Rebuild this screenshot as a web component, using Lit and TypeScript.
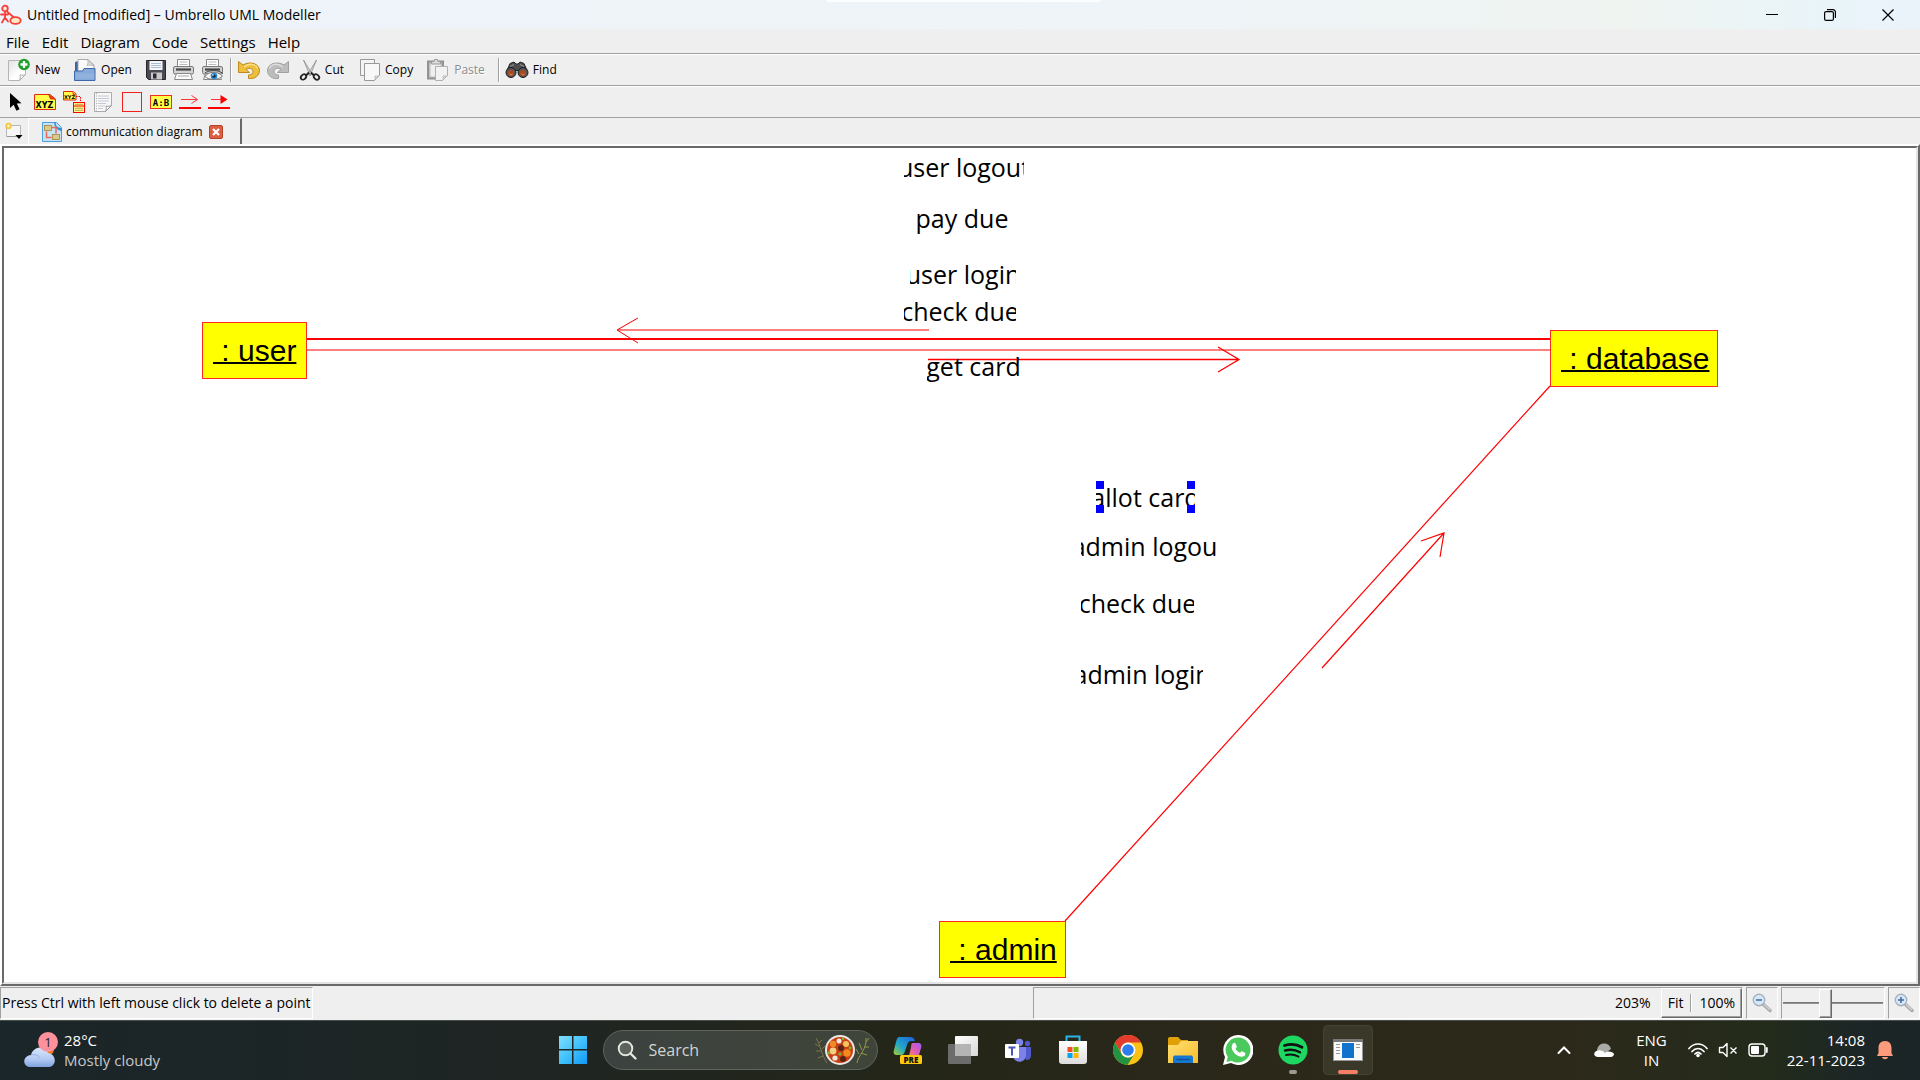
import { LitElement, html, svg, css, nothing, type TemplateResult } from "lit";
import { customElement, state } from "lit/decorators.js";

const icon = (w: number, h: number, body: TemplateResult) => html`<svg
  width=${w} height=${h} viewBox="0 0 ${w} ${h}" fill="none" aria-hidden="true">${body}</svg>`;

/* ---------- window and toolbar icons ---------- */
const appIcon = icon(22, 22, svg`
  <g stroke="#f5413b" stroke-width="1.8" stroke-linecap="round">
    <circle cx="5" cy="4.500" r="2.800" fill="#fbe3e1"/><path d="M5 7.500v6M1 10.500h7M5 13.500l-3 5M5 13.500l3 4M7 7.500l7 6"/>
    <ellipse cx="15.500" cy="16.500" rx="5.200" ry="3.400" fill="#ffecc4"/></g>`);

const newIcon = icon(24, 24, svg`
  <path d="M1.500 2.500h17v14l-6 6h-11z" fill="url(#pg)" stroke="#b5b5b5"/>
  <defs><linearGradient id="pg" x1="0" y1="0" x2="1" y2="1"><stop stop-color="#e2e2e2"/><stop offset=".6" stop-color="#fff"/></linearGradient></defs>
  <path d="M12.500 22.500c1-2 1-4 .5-5.500 2 .5 4 .3 5.500-.5z" fill="#fff" stroke="#aaa"/>
  <circle cx="17" cy="6.500" r="5.800" fill="#1f9e2c"/><path d="M17 3v7M13.500 6.500h7" stroke="#fff" stroke-width="2.400"/>`);

const openIcon = icon(24, 24, svg`
  <path d="M2 18V5c0-1 .5-1.500 1.500-1.500h5V18z" fill="#3c65a0"/>
  <path d="M5 15V1.500h10l6 5.500v8z" fill="#fafafa" stroke="#aaa"/><path d="M14.500 2c1 2 .5 4-.5 5.500 2-.5 4.500-.5 6.500.3z" fill="#ddd" stroke="#aaa" stroke-width=".7"/>
  <path d="M1.500 22.500V13h8l1.500-2.500h11v12z" fill="#86aad9" stroke="#3d68a6"/><path d="M2.500 18h19" stroke="#a9c4e8" stroke-width="5" opacity=".35"/>`);

const saveIcon = icon(22, 22, svg`
  <path d="M1.500 1.500h19v19h-17l-2-2z" fill="#4a4a52" stroke="#26262b"/>
  <rect x="4.500" y="2" width="13" height="9" fill="#f4f7fb"/><path d="M6 4.500h10M6 6.500h10M6 8.500h10" stroke="#a3b5cf" stroke-width=".9"/>
  <rect x="6" y="13.500" width="11" height="7" fill="#c9c9cc"/><rect x="8" y="14.500" width="3.500" height="5" fill="#2b2b30"/>`);

const printBody = svg`
  <path d="M5.500 9V1.500h12V9" fill="#fff" stroke="#888"/><path d="M7.500 4h8M7.500 6.500h8" stroke="#bbb"/>
  <rect x="1.500" y="8.500" width="20" height="7.500" rx="1.500" fill="#d2d2d2" stroke="#777"/>
  <path d="M4 11.500h15" stroke="#444" stroke-width="2.200"/>
  <path d="M4.500 15.500h14l2 6h-18z" fill="#fcfcfc" stroke="#888"/><path d="M6 18h11" stroke="#aaa"/>`;
const printIcon = icon(24, 24, printBody);
const previewIcon = icon(24, 24, svg`${printBody}
  <path d="M4 18.500c3-5 12-6 17.500-.5-4.500 4.500-13.500 4.500-17.500.5z" fill="#f5f5f5" stroke="#777"/>
  <circle cx="13" cy="18" r="3.300" fill="#2d86c8"/><circle cx="13" cy="18" r="1.600" fill="#10273e"/><circle cx="12" cy="17" r=".8" fill="#fff"/>
  <path d="M4 15c4-3 13-3.500 18 .5" stroke="#444"/>`);

const undoIcon = icon(24, 20, svg`
  <path d="M1.500 1.500v11h11L9 9.500c2.500-2 6.500-1.500 7 1.500.3 2.300-1.500 4-4.500 4v3.500c6 .8 11-2.500 11-8 0-6.500-9-10-16.500-5.500z" fill="#eebf3c" stroke="#bd8a1c" stroke-linejoin="round"/>
  <path d="M7 7c5-4.500 12-3 13.500 1.500" stroke="#fbe28e" stroke-width="1.300"/>`);
const redoIcon = icon(24, 20, svg`
  <path d="M22.500 1.500v11h-11L15 9.500c-2.500-2-6.500-1.500-7 1.500-.3 2.300 1.500 4 4.500 4v3.500c-6 .8-11-2.500-11-8C1.500 4 10.500.5 18 5z" fill="#bdbdbd" stroke="#a0a0a0" stroke-linejoin="round"/>
  <path d="M17 7c-5-4.500-12-3-13.500 1.500" stroke="#dedede" stroke-width="1.300"/>`);

const cutIcon = icon(26, 22, svg`<g transform="translate(4 0)">
  <path d="M4.500 1l8.500 14-2 1.500zM17.500 1L9 15l2 1.500z" fill="#e3e3e3" stroke="#8a8a8a" stroke-width=".8"/>
  <path d="M10 13.500l-3 3M12 13.500l3 3" stroke="#222" stroke-width="2"/>
  <ellipse cx="4.500" cy="18" rx="3" ry="2.300" transform="rotate(-45 4.500 18)" stroke="#222" stroke-width="1.800"/>
  <ellipse cx="17.500" cy="18" rx="3" ry="2.300" transform="rotate(45 17.500 18)" stroke="#222" stroke-width="1.800"/></g>`);

const copyIcon = icon(24, 24, svg`<g transform="translate(2 0)">
  <path d="M1.500 1.500h14v16h-14z" fill="#f4f4f4" stroke="#999"/>
  <path d="M5.500 5.500h15v12l-5 5h-10z" fill="#f8f8f8" stroke="#999"/><path d="M15.500 22.500c.8-1.500.8-3 .5-4.500 1.500.4 3 .3 4.500-.5z" fill="#ddd" stroke="#aaa" stroke-width=".8"/></g>`);
const pasteIcon = icon(24, 24, svg`
  <path d="M2 3.500h15v17H2z" fill="#bfbfbf" stroke="#929292" stroke-width="2"/>
  <path d="M4.500 5.500h10v13h-10z" fill="#efefef"/>
  <path d="M5.500 6V3.500h2.500l.5-2h3l.5 2h2.500V6z" fill="#dcdcdc" stroke="#999"/>
  <path d="M9.500 8.500h12v9l-5 5h-7z" fill="#f2f2f2" stroke="#b0b0b0"/><path d="M16.500 22.500c.8-1.500.8-3 .5-4.500 1.500.4 3 .3 4.500-.5z" fill="#ddd" stroke="#b0b0b0" stroke-width=".8"/>`);
const findIcon = icon(24, 18, svg`
  <path d="M5 2.500l4-1.500 2 2h2l2-2 4 1.500 3 7H2z" fill="#4e4e50" stroke="#222"/><path d="M5 5.500l4-2M19 5.500l-4-2" stroke="#999"/>
  <circle cx="6" cy="11.500" r="5" fill="#55555a" stroke="#1b1b1b"/><circle cx="18" cy="11.500" r="5" fill="#55555a" stroke="#1b1b1b"/>
  <circle cx="6" cy="12" r="3" fill="#a84a1c"/><circle cx="18" cy="12" r="3" fill="#a84a1c"/><path d="M4.500 13c1 1 2 1 3 0M16.500 13c1 1 2 1 3 0" stroke="#e8915a"/>`);

/* ---------- work toolbar icons ---------- */
const pointerIcon = icon(16, 20, svg`<path d="M2 1v15l3.600-3.200 2.800 6 3.200-1.600-2.800-5.600 4.700-.4z" fill="#000"/>`);
const objectIcon = icon(22, 16, svg`
  <path d="M.5.500h15.500l5.500 4.500v10.500H.5z" fill="#ffff4a" stroke="#e02a12"/><path d="M15 1l1.500 4H21z" fill="#f6400c" stroke="#e02a12"/>
  <text x="10.500" y="13.500" font-family="DejaVu Sans" font-size="8" font-weight="700" text-anchor="middle" fill="#000">XYZ</text>`);
const subsystemIcon = icon(22, 22, svg`
  <path d="M.5.500h9.500l3 2.500v6H.5z" fill="#ffff4a" stroke="#e02a12"/><path d="M9 1l1 3h3z" fill="#f6400c"/>
  <text x="6.500" y="8" font-family="DejaVu Sans" font-size="5" font-weight="700" text-anchor="middle" fill="#000">XYZ</text>
  <path d="M13 5.500h4.500V11" stroke="#f00" stroke-dasharray="1.500 1"/>
  <rect x="10.500" y="11.500" width="11" height="10" fill="#fffd9a" stroke="#f00"/><path d="M10.500 15h11" stroke="#f00"/><path d="M12 13.300h8M12 17.200h8M12 19.300h8" stroke="#a38a2a" stroke-width=".8"/>`);
const noteIcon = icon(20, 22, svg`
  <path d="M1.500 1.500h17v13l-6 6h-11z" fill="#f7f7f7" stroke="#aaa"/><path d="M5 5h11M5 7.500h11M5 10h11M5 12.500h8M5 15h7M5 17.500h5" stroke="#c3cad3"/>
  <path d="M3.500 2v18" stroke="#aaa" stroke-dasharray="1 1.500"/><path d="M12.500 20.500c1-2 1-4 .5-5.500 2 .5 4 .3 5.500-.5z" fill="#fff" stroke="#999"/>`);
const boxIcon = icon(20, 20, svg`<rect x=".5" y=".5" width="19" height="19" stroke="#f2201a"/>`);
const instanceIcon = icon(22, 14, svg`
  <rect x=".5" y=".5" width="21" height="13" fill="#ffff4a" stroke="#f2301a"/>
  <text x="11" y="10.500" font-family="DejaVu Sans Mono" font-size="9" font-weight="700" text-anchor="middle" fill="#000">A:B</text>`);
const asyncIcon = icon(22, 16, svg`<path d="M2 5.500h16M12.500 1.500l6 4-6 4" stroke="#f33"/><path d="M0 14h22" stroke="#f00" stroke-width="2"/>`);
const syncIcon = icon(22, 16, svg`<path d="M3 5.500h12" stroke="#f33"/><path d="M12.500 1l7 4.500-7 4.500z" fill="#f00"/><path d="M0 14h22" stroke="#f00" stroke-width="2"/>`);

const newTabIcon = icon(20, 18, svg`
  <path d="M2.500 3.500h14v11h-14z" fill="#f6f6f6" stroke="#b5b5b5"/><path d="M3 14.500h14" stroke="#999"/>
  <circle cx="4.500" cy="4" r="3.200" fill="#f3c64a"/><circle cx="4.500" cy="4" r="1.400" fill="#fff3c0"/><path d="M11.500 13h7L15 17z" fill="#000"/>`);
const tabIcon = icon(20, 20, svg`
  <path d="M.5.500h14l5 5v14H.5z" fill="#c6e2f6" stroke="#4a9fdc"/><path d="M14 0c-1 3 1 6 6 6v3c-4 0-8-4-8-9z" fill="#3391d8"/>
  <rect x="2.500" y="3.500" width="7" height="5" fill="#d9c98a" stroke="#a3853a" stroke-width=".8"/>
  <rect x="10.500" y="12.500" width="7" height="5" fill="#d9c98a" stroke="#a3853a" stroke-width=".8"/>
  <path d="M4.500 9.500v6h5M9.500 5.500h4.500v6" stroke="#ec6a58" stroke-width="1.500"/>`);
const closeTabIcon = icon(14, 14, svg`<rect x=".5" y=".5" width="13" height="13" rx="1.500" fill="#dd5e40" stroke="#b5432a"/><path d="M4 4l6 6M10 4l-6 6" stroke="#fff" stroke-width="2.200"/>`);

const zoomIcon = (plus: boolean) => icon(20, 20, svg`
  <path d="M11.500 11.500l6.500 6" stroke="#a9a9a9" stroke-width="3.400" stroke-linecap="round"/><path d="M12 11.500l6 5.500" stroke="#d5d5d5" stroke-width="1.200"/>
  <circle cx="7" cy="7" r="5.700" fill="#d6e7f7" stroke="#a5b2c0" stroke-width="1.400"/>
  <path d="M4 7h6" stroke="#41689c" stroke-width="1.500"/>${plus ? svg`<path d="M7 4v6" stroke="#41689c" stroke-width="1.500"/>` : nothing}`);

/* ---------- taskbar icons ---------- */
const weatherIcon = icon(34, 38, svg`
  <defs><linearGradient id="cl" x1="0" y1="0" x2="0" y2="1"><stop stop-color="#d9e6fb"/><stop offset=".6" stop-color="#b3caf3"/><stop offset="1" stop-color="#7fa2de"/></linearGradient></defs>
  <circle cx="23" cy="18" r="7" fill="#f47a1c"/>
  <path d="M7 36c-9 0-9-11 0-12 2-9 15-10 17-2 9 1 9 14 0 14z" fill="url(#cl)"/><path d="M7 24c4-1 7 0 9 3" stroke="#8fb0e8"/>
  <circle cx="24" cy="11" r="10" fill="#ff919c"/><text x="24" y="16" font-family="Open Sans" font-size="13" text-anchor="middle" fill="#222">1</text>`);
const startIcon = icon(30, 30, svg`
  <defs><linearGradient id="st" x1="0" y1="0" x2="30" y2="30" gradientUnits="userSpaceOnUse"><stop stop-color="#86e0ff"/><stop offset=".5" stop-color="#42c2fb"/><stop offset="1" stop-color="#0d96f5"/></linearGradient></defs>
  <path d="M1 1h13v13H1zM15.500 1H29v13H15.500zM1 15.500h13V29H1zM15.500 15.500H29V29H15.500z" fill="url(#st)"/>`);
const searchIcon = icon(20, 20, svg`<circle cx="8.500" cy="8.500" r="6.800" stroke="#e4e6e3" stroke-width="1.900" fill="#5d625b"/><path d="M13.500 13.500l5 5" stroke="#e4e6e3" stroke-width="2.400" stroke-linecap="round"/>`);
const foodIcon = icon(56, 32, svg`
  <g stroke="#7d7548"><path d="M2 4c5 8 5 16 11 25M5 12l-4-2M7 17l-5 0M9 22l-5 2M5 9l3-3M8 15l3-3"/></g>
  <g stroke="#8d9a4a"><path d="M43 29c1-8 10-13 9-25M45 20l-3-5M48 16l-3-7M50 13l5 0M47 19l6 2M52 8l3-4"/></g>
  <circle cx="26" cy="16" r="15" fill="#ece9e4"/><circle cx="26" cy="16" r="13" fill="#c83f16"/>
  <circle cx="19" cy="10" r="3.200" fill="#f08a24"/><circle cx="33" cy="19" r="3.700" fill="#f38a1e"/><circle cx="19" cy="17" r="3.400" fill="#f5cf83"/>
  <circle cx="32" cy="10" r="3" fill="#f2c65e"/><circle cx="25" cy="7" r="2.500" fill="#f0ece2"/><circle cx="27" cy="14" r="3" fill="#5a2415"/>
  <circle cx="29" cy="25" r="3" fill="#5a2415"/><circle cx="21" cy="24" r="2.600" fill="#f3e9dc"/><circle cx="26" cy="20" r="1.600" fill="#76b82a"/><circle cx="15" cy="19" r="1.400" fill="#76b82a"/><circle cx="36" cy="14" r="1.400" fill="#76b82a"/><circle cx="29" cy="5" r="1.200" fill="#76b82a"/>`);
const copilotIcon = icon(30, 30, svg`
  <defs><linearGradient id="ca" x1="0" y1="1" x2="1" y2="0"><stop stop-color="#a6cf30"/><stop offset=".4" stop-color="#22a7c8"/><stop offset="1" stop-color="#1b5fe0"/></linearGradient>
  <linearGradient id="cb" x1="1" y1="0" x2="0" y2="1"><stop stop-color="#a05cf0"/><stop offset=".5" stop-color="#e35bb4"/><stop offset="1" stop-color="#ff9a3c"/></linearGradient></defs>
  <path d="M6 2h11c3 0 4 1 5 4h-4c-2 0-3 1-4 4l-2 6c-1 3-2 4-4 4H4c-3 0-4-2-3-5l2-8c1-4 2-5 3-5z" fill="url(#ca)"/>
  <path d="M19 8h6c3 0 4 2 3 5l-2 7c-1 2-2 3-4 3h-8c2-1 2-3 3-6l1-5c.5-2 0-3 1-4z" fill="url(#cb)"/>
  <rect x="7" y="20" width="22" height="9" rx="1.500" fill="#ffc90e"/><text x="18" y="27.500" font-family="Open Sans" font-size="8" font-weight="800" text-anchor="middle" fill="#111">PRE</text>`);
const taskViewIcon = icon(32, 30, svg`
  <defs><linearGradient id="tv" x1="0" y1="0" x2="1" y2="1"><stop stop-color="#fff"/><stop offset="1" stop-color="#d8d8d8"/></linearGradient></defs>
  <rect x="1" y="9" width="23" height="20" rx="1" fill="#6c6c6c"/><rect x="8" y="1" width="23" height="20" rx="1" fill="url(#tv)"/><path d="M8 9h16v12H8z" fill="#b4b4b4"/>`);
const teamsIcon = icon(28, 26, svg`
  <circle cx="15.500" cy="5.500" r="3.700" fill="#7b83eb"/><circle cx="23.500" cy="6.500" r="2.700" fill="#5059c9"/>
  <path d="M18 10h9v8c0 4-2 5-5 5z" fill="#5059c9"/><path d="M9 10h13v8c0 9-13 9-13 0z" fill="#7b83eb"/>
  <rect x="1" y="7" width="14" height="14" rx="1" fill="#fff"/><path d="M4.500 10.500h7M8 10.500v8" stroke="#4b53bc" stroke-width="2"/>`);
const storeIcon = icon(30, 30, svg`
  <defs><linearGradient id="so" x1="0" y1="0" x2="0" y2="1"><stop stop-color="#fff"/><stop offset="1" stop-color="#dcdcdc"/></linearGradient></defs>
  <path d="M8.500 7V1.500h13V7" stroke="#28b5e8" stroke-width="2"/><path d="M1 6h28v20c0 2-1 3-3 3H4c-2 0-3-1-3-3z" fill="url(#so)"/>
  <path d="M9.500 12h5v5h-5z" fill="#f25022"/><path d="M15.500 12h5v5h-5z" fill="#7fba00"/><path d="M9.500 18h5v5h-5z" fill="#00a4ef"/><path d="M15.500 18h5v5h-5z" fill="#ffb900"/>`);
const chromeIcon = icon(30, 30, svg`
  <circle cx="15" cy="15" r="15" fill="#fbc116"/><path d="M2 7.500A15 15 0 0 1 28 7.500H15a7.500 7.500 0 0 0-6.500 11z" fill="#e33b2e"/>
  <path d="M2 7.500A15 15 0 0 0 14.500 30l7-11.300A7.500 7.500 0 0 1 8.500 18.700z" fill="#229342"/>
  <circle cx="15" cy="15" r="7.400" fill="#fff"/><circle cx="15" cy="15" r="5.800" fill="#2e7df0"/>`);
const folderIcon = icon(30, 28, svg`
  <defs><linearGradient id="fo" x1="0" y1="0" x2="1" y2="1"><stop stop-color="#ffdf73"/><stop offset="1" stop-color="#f9bd2b"/></linearGradient></defs>
  <path d="M0 3c0-1 .5-2 2-2h8l3 3h7v7H0z" fill="#e0a008"/><path d="M0 9h10l3-4h17v22H0z" fill="url(#fo)"/>
  <path d="M5 27v-5c0-2 1-2.500 2.500-2.500h15c1.500 0 2.500.5 2.500 2.500v5z" fill="#1577cd"/><path d="M8.500 23.500h13" stroke="#0b4f94" stroke-width="1.400"/>`);
const whatsappIcon = icon(30, 30, svg`
  <path d="M15 0a15 15 0 1 1-7 28L0 30l2-8A15 15 0 0 1 15 0z" fill="#fff"/><path d="M15 2.500a12.500 12.500 0 1 1-6.500 23.200L3.500 27l1.300-5A12.500 12.500 0 0 1 15 2.500z" fill="#4bc95c"/>
  <path d="M10 8.500c1-1 2-.8 2.500 0l1.300 3c.2.700-1 1.700-1.200 2.200.8 1.800 2.300 3.200 4.200 4.100.7-.2 1.500-1.700 2.200-1.500l3 1.500c.7.500.4 2-.4 2.900C15.500 25 5 14 10 8.500z" fill="#fff"/>`);
const spotifyIcon = icon(30, 30, svg`
  <circle cx="15" cy="15" r="14.500" fill="#1ed760"/><g stroke="#111" stroke-linecap="round"><path d="M6.500 10.500c6-1.700 12.500-1.200 17.500 1.700" stroke-width="2.800"/><path d="M7 15.500c5-1.300 10.500-.8 15 1.800" stroke-width="2.400"/><path d="M8 20c4-1 8.500-.6 12.500 1.600" stroke-width="2"/></g>`);
const windowIcon = icon(30, 22, svg`
  <rect width="30" height="22" fill="#fafafa"/><rect x=".5" y=".5" width="29" height="21" stroke="#999"/><path d="M0 1.500h30" stroke="#777" stroke-width="3"/>
  <path d="M3 5.500h4M3 8.500h4M3 11.500h4M3 14.500h4M23 5.500h4M23 8.500h4" stroke="#999"/><rect x="9" y="4" width="12" height="15" fill="#1273cc"/>`);
const chevronIcon = icon(14, 10, svg`<path d="M1.500 8L7 2.500 12.500 8" stroke="#fff" stroke-width="2" stroke-linecap="round"/>`);
const cloudIcon = icon(20, 14, svg`<path d="M3 8c0-9 12-10 14-2l-7 5z" fill="#a9a9a6"/><path d="M4 14c-5 0-5-6 0-6.500 3-.5 5 .5 7 2.500 3-3 8-1 9 1 0 2-2 3-3 3z" fill="#fff"/>`);
const wifiIcon = icon(20, 16, svg`<g stroke="#fff" stroke-width="1.700" stroke-linecap="round"><path d="M1 6.500c5-6 13-6 18 0M4 9.500c3.500-4 8.500-4 12 0M7 12c2-2 4-2 6 0"/></g><circle cx="10" cy="13.500" r="1.800" fill="#fff"/>`);
const muteIcon = icon(20, 16, svg`<path d="M1.500 5.500H5l4-4v13l-4-4H1.500zM12.500 5.500l6 6M18.500 5.500l-6 6" stroke="#fff" stroke-width="1.400" stroke-linejoin="round"/>`);
const batteryIcon = icon(20, 14, svg`<rect x="1" y="1" width="16" height="12" rx="3" stroke="#fff" stroke-width="1.400"/><rect x="3" y="3" width="8" height="8" rx="1" fill="#fff"/><path d="M18.800 5v4" stroke="#fff" stroke-width="1.800" stroke-linecap="round"/>`);
const bellIcon = icon(18, 20, svg`<path d="M9 1c4.500 0 6.500 3 6.500 7v5l1.500 3H1l1.500-3V8c0-4 2-7 6.500-7zM6 17h6c-.5 3-5.500 3-6 0z" fill="#fd9b7c"/>`);

/* ---------- diagram data, in canvas coordinates ---------- */
interface Box { x: number; y: number; w: number }
const objects: (Box & { name: string })[] = [
  { name: "user", x: 198, y: 174, w: 105 },
  { name: "database", x: 1546, y: 182, w: 168 },
  { name: "admin", x: 935, y: 773, w: 127 },
];
const messages: (Box & { text: string; selected?: boolean })[] = [
  { text: "user logout", x: 900, y: 3, w: 120 },
  { text: "pay due", x: 906, y: 54, w: 104 },
  { text: "user login", x: 906, y: 110, w: 106 },
  { text: "check due", x: 900, y: 147, w: 112 },
  { text: "get card", x: 923, y: 202, w: 93 },
  { text: "allot card", x: 1092, y: 333, w: 99, selected: true },
  { text: "admin logout", x: 1077, y: 382, w: 136 },
  { text: "check due", x: 1077, y: 439, w: 113 },
  { text: "admin login", x: 1077, y: 510, w: 122 },
];

@customElement("uml-canvas")
export class UmlCanvas extends LitElement {
  static styles = css`
    :host { display: block; position: relative; overflow: hidden; background: #fff; }
    .links { position: absolute; top: 0; left: 0; width: 100%; height: 100%; }
    .object { position: absolute; box-sizing: border-box; border: 1px solid #ff2a20; background: #ff0;
      padding: 1px 10px 0; font: 30px/54px "Liberation Sans", Arial, sans-serif; white-space: pre; text-decoration: underline;
      text-decoration-thickness: 2px; text-decoration-skip-ink: none; }
    .message { position: absolute; display: flex; justify-content: center; overflow: hidden; white-space: pre;
      font: 25px/32px "Open Sans", sans-serif; }
    .handle { position: absolute; width: 8px; height: 8px; background: #00f; }
    .tl { top: 0; left: 0; } .tr { top: 0; right: 0; } .bl { bottom: 0; left: 0; } .br { bottom: 0; right: 0; }
  `;
  render() {
    return html`
      <svg class="links" fill="none" stroke="#f00" aria-hidden="true">
        <path d="M301 191H1546" stroke-width="2"/>
        <path d="M301 202H1546"/>
        <path d="M925 182H614M634 170L613 182L634 195"/>
        <path d="M924 211.500H1235M1214 199L1235 211.500L1214 224" stroke-width="1.300"/>
        <path d="M1061 773L1546 238" stroke-width="1.200"/>
        <path d="M1318 520L1440 385M1417 393L1440 385L1436 409" stroke-width="1.200"/>
      </svg>
      ${messages.map((m) => html`<div class="message" style="left:${m.x}px;top:${m.y}px;width:${m.w}px">${m.text}${m.selected
        ? ["tl", "tr", "bl", "br"].map((c) => html`<span class="handle ${c}"></span>`) : nothing}</div>`)}
      ${objects.map((o) => html`<div class="object" style="left:${o.x}px;top:${o.y}px;width:${o.w}px"> : ${o.name}</div>`)}
    `;
  }
}

@customElement("app-root")
export class AppRoot extends LitElement {
  static styles = css`
    :host { display: flex; flex-direction: column; height: 100vh; overflow: hidden; background: #efefef; color: #000;
      font: 14px/20px "Open Sans", "Segoe UI", sans-serif; }
    svg { display: block; flex: none; }
    button { font: inherit; color: inherit; background: none; border: 0; padding: 0; margin: 0; }
    .titlebar { position: relative; display: flex; align-items: center; height: 29px; gap: 5px; padding-right: 3px;
      background: linear-gradient(90deg, #eff3fa 0%, #eef4f8 60%, #eff4f1 85%, #e9f4f9 95%, #eaf3fa 100%); }
    .peek { position: absolute; top: 0; left: 43%; width: 275px; height: 2px; background: #fcfdfe; border-radius: 0 0 4px 4px; }
    .title { margin: 0; font: inherit; flex: 1; }
    .controls { display: flex; }
    .controls button { width: 58px; height: 29px; display: grid; place-items: center; }
    .menus { display: flex; height: 23px; align-items: center; gap: 12px; padding: 1px 6px 0; border-bottom: 1px solid #a0a0a0; font-size: 15px; }
    .toolbar { display: flex; align-items: center; height: 30px; border-top: 1px solid #fff; border-bottom: 1px solid #a0a0a0; padding: 0 7px; font-size: 12px; }
    .tool { display: flex; align-items: center; justify-content: center; gap: 4px; }
    .tool:disabled { color: #8c8c8c; text-shadow: 1px 1px #fff; }
    .main { gap: 5px; }
    .text { margin-right: 8px; }
    .sep { width: 1px; height: 24px; background: #a0a0a0; border-right: 1px solid #fff; }
    .work { gap: 7px; padding-left: 5px; }
    .work .tool { width: 22px; }
    .tabs { display: flex; height: 26px; font-size: 12px; }
    .newtab { width: 28px; display: grid; place-items: center; }
    .tab { display: flex; align-items: center; gap: 4px; padding: 0 17px 0 13px; border-left: 1px solid #fff; border-top: 1px solid #fff; border-right: 2px solid #696969; }
    .tab .close { margin-left: 2px; }
    .frame { flex: 1; min-height: 0; display: flex; border: 2px solid; border-color: #fff #696969 #696969 #fff; }
    .inner { flex: 1; display: flex; border: 2px solid; border-color: #696969 #e3e3e3 #e3e3e3 #696969; }
    uml-canvas { flex: 1; }
    .status { display: flex; padding: 1px 0; gap: 3px; height: 32px; }
    .panel { display: flex; align-items: center; box-sizing: border-box; border: 1px solid; border-color: #a0a0a0 #fff #fff #a0a0a0; }
    .hint { padding: 0 1px; }
    .zoomstate { width: 37%; justify-content: flex-end; gap: 10px; margin-left: auto; }
    .presets { display: flex; align-items: center; gap: 7px; padding: 0 6px; height: 28px; border: 1px solid; border-color: #fff #696969 #696969 #fff; box-shadow: inset -1px -1px #a0a0a0; }
    .presets .sep { height: 18px; }
    .zoom { width: 32px; justify-content: center; }
    .zoom button { display: block; }
    .slide { padding: 0 1px; }
    input[type="range"] { appearance: none; width: 100px; height: 29px; margin: 0; background: linear-gradient(#696969, #a0a0a0) center / 100% 2px no-repeat; }
    input[type="range"]::-webkit-slider-thumb { appearance: none; width: 13px; height: 29px; background: #efefef; border: 1px solid; border-color: #fff #696969 #696969 #fff; box-shadow: inset -1px -1px #a0a0a0; }
    .taskbar { display: grid; grid-template-columns: 1fr auto 1fr; align-items: center; height: 58px; padding-bottom: 1px; border-top: 1px solid #4a4f4c; color: #fff; font-size: 15px;
      background: linear-gradient(90deg, #1b262a 0%, #1e2524 25%, #242618 48%, #2b281a 65%, #2c291a 82%, #232b1b 92%, #1c2626 97%, #1b2527 100%); }
    .weather { display: flex; gap: 6px; align-items: center; justify-self: start; text-align: left; padding-left: 24px; }
    .weather .desc { color: #c6c9c9; }
    .apps { display: flex; gap: 5px; align-items: center; }
    .app { position: relative; width: 50px; height: 50px; display: grid; place-items: center; border-radius: 5px; }
    .active { background: #3a3829; box-shadow: inset 0 0 0 1px #454334; }
    .run { position: absolute; bottom: 1px; left: 21px; width: 8px; height: 4px; border-radius: 2px; background: #9b9b94; }
    .active .run { left: 15px; width: 20px; background: #f47f66; }
    .search { display: flex; align-items: center; gap: 12px; width: 275px; height: 40px; box-sizing: border-box; padding: 0 7px 0 13px; border: 1px solid #5f645c; border-radius: 20px;
      background: linear-gradient(90deg, #3c423f, #40453a); }
    .search input { flex: 1; min-width: 0; background: none; border: 0; padding: 0; font: 16px/20px "Open Sans", sans-serif; color: #fff; }
    .search input::placeholder { color: #d2d4d0; opacity: 1; }
    .tray { display: flex; align-items: center; justify-content: flex-end; padding-right: 26px; }
    .tray button { display: flex; align-items: center; }
    .lang { text-align: center; margin: 0 21px 0 22px; }
    .quick { gap: 10px; }
    .clock { text-align: right; margin: 0 11px 0 19px; }
    .cloud { margin-left: 23px; }
  `;

  @state() private zoom = 41;

  private tool(label: string, glyph: TemplateResult, text = false, disabled = false) {
    return html`<button class="tool ${text ? "text" : ""}" ?disabled=${disabled} aria-label=${label}>${glyph}${text ? html`<span>${label}</span>` : nothing}</button>`;
  }
  private app(label: string, glyph: TemplateResult, running = false, active = false) {
    return html`<button class="app ${active ? "active" : ""}" aria-label=${label}>${glyph}${running ? html`<span class="run"></span>` : nothing}</button>`;
  }

  render() {
    return html`
      <header class="titlebar">
        <span class="peek"></span>
        ${appIcon}
        <h1 class="title">Untitled [modified] – Umbrello UML Modeller</h1>
        <div class="controls">
          <button aria-label="Minimize">${icon(12, 12, svg`<path d="M0 5.500h12" stroke="#000"/>`)}</button>
          <button aria-label="Restore">${icon(12, 12, svg`<rect x=".6" y="2.600" width="8.800" height="8.800" rx="1.500" stroke="#000" stroke-width="1.200"/><path d="M3 .6h6a2.400 2.400 0 0 1 2.400 2.400v6" stroke="#000" stroke-width="1.200"/>`)}</button>
          <button aria-label="Close">${icon(12, 12, svg`<path d="M.5.500l11 11M11.500.500l-11 11" stroke="#000" stroke-width="1.200"/>`)}</button>
        </div>
      </header>
      <nav class="menus">${["File", "Edit", "Diagram", "Code", "Settings", "Help"].map((m) => html`<button>${m}</button>`)}</nav>
      <div class="toolbar main">
        ${this.tool("New", newIcon, true)}${this.tool("Open", openIcon, true)}${this.tool("Save", saveIcon)}
        ${this.tool("Print", printIcon)}${this.tool("Print Preview", previewIcon)}
        <span class="sep"></span>
        ${this.tool("Undo", undoIcon)}${this.tool("Redo", redoIcon)}${this.tool("Cut", cutIcon, true)}
        ${this.tool("Copy", copyIcon, true)}${this.tool("Paste", pasteIcon, true, true)}
        <span class="sep"></span>
        ${this.tool("Find", findIcon, true)}
      </div>
      <div class="toolbar work">
        ${this.tool("Select", pointerIcon)}${this.tool("Object", objectIcon)}${this.tool("Subsystem", subsystemIcon)}${this.tool("Note", noteIcon)}
        ${this.tool("Box", boxIcon)}${this.tool("Instance", instanceIcon)}${this.tool("Asynchronous Message", asyncIcon)}${this.tool("Synchronous Message", syncIcon)}
      </div>
      <div class="tabs">
        <button class="newtab" aria-label="New diagram">${newTabIcon}</button>
        <div class="tab">${tabIcon}<span>communication diagram</span><button class="close" aria-label="Close tab">${closeTabIcon}</button></div>
      </div>
      <main class="frame"><div class="inner"><uml-canvas></uml-canvas></div></main>
      <footer class="status">
        <div class="panel hint">Press Ctrl with left mouse click to delete a point</div>
        <div class="panel zoomstate"><span>203%</span>
          <div class="presets"><button>Fit</button><span class="sep"></span><button>100%</button></div></div>
        <div class="panel zoom"><button aria-label="Zoom out">${zoomIcon(false)}</button></div>
        <div class="panel slide"><input type="range" min="0" max="100" aria-label="Zoom" .value=${String(this.zoom)}
          @input=${(e: Event) => (this.zoom = Number((e.target as HTMLInputElement).value))}></div>
        <div class="panel zoom"><button aria-label="Zoom in">${zoomIcon(true)}</button></div>
      </footer>
      <div class="taskbar">
        <button class="weather">${weatherIcon}<span><div>28°C</div><div class="desc">Mostly cloudy</div></span></button>
        <div class="apps">
          ${this.app("Start", startIcon)}
          <label class="search">${searchIcon}<input type="text" placeholder="Search" aria-label="Search">${foodIcon}</label>
          ${this.app("Copilot", copilotIcon)}${this.app("Task View", taskViewIcon)}${this.app("Teams", teamsIcon)}${this.app("Store", storeIcon)}
          ${this.app("Chrome", chromeIcon)}${this.app("File Explorer", folderIcon)}${this.app("WhatsApp", whatsappIcon)}
          ${this.app("Spotify", spotifyIcon, true)}${this.app("Umbrello", windowIcon, true, true)}
        </div>
        <div class="tray">
          <button aria-label="Hidden icons">${chevronIcon}</button>
          <button class="cloud" aria-label="OneDrive">${cloudIcon}</button>
          <button class="lang"><span>ENG<br>IN</span></button>
          <button class="quick" aria-label="Quick settings">${wifiIcon}${muteIcon}${batteryIcon}</button>
          <button class="clock"><span>14:08<br>22-11-2023</span></button>
          <button aria-label="Notifications">${bellIcon}</button>
        </div>
      </div>
    `;
  }
}
